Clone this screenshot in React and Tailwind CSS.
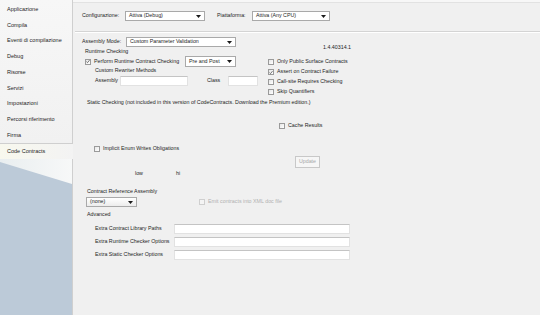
import React from "react";

const navItems = [
  "Applicazione",
  "Compila",
  "Eventi di compilazione",
  "Debug",
  "Risorse",
  "Servizi",
  "Impostazioni",
  "Percorsi riferimento",
  "Firma",
];

const Arrow = () => (
  <svg width="5" height="3" viewBox="0 0 5 3" className="shrink-0">
    <path d="M0 0 L5 0 L2.5 3 Z" fill="#1a1a1a" />
  </svg>
);

const Select = ({ value, className = "" }) => (
  <div
    className={`flex items-center justify-between h-[10px] border border-[#a9a9a9] bg-white pl-[3px] pr-[3px] shrink-0 ${className}`}
  >
    <span className="leading-none">{value}</span>
    <Arrow />
  </div>
);

const Checkbox = ({ checked, disabled, label, className = "" }) => (
  <div className={`flex items-center h-[10px] ${className}`}>
    <div
      className={`w-[6px] h-[6px] shrink-0 border flex items-center justify-center ${
        disabled ? "border-[#cfcfcf] bg-[#f4f4f4]" : "border-[#9a9a9a] bg-gradient-to-br from-[#e6e6e6] to-white"
      }`}
    >
      {checked && (
        <svg width="5" height="5" viewBox="0 0 5 5">
          <path d="M0.6 2.6 L1.9 3.9 L4.4 0.8" stroke="#444" strokeWidth="0.9" fill="none" />
        </svg>
      )}
    </div>
    <span className={`ml-[3px] leading-none ${disabled ? "text-[#b0b0b0]" : ""}`}>{label}</span>
  </div>
);

const Input = ({ className = "" }) => (
  <div className={`h-[10px] shrink-0 bg-white border border-[#e2e2e2] border-t-[#c4c4c4] ${className}`} />
);

export default function App() {
  return (
    <div
      className="flex w-[540px] h-[315px] overflow-hidden whitespace-nowrap bg-[#f0f0f0] text-[5.3px] text-[#1e1e1e]"
      style={{ fontFamily: '"Liberation Sans", Arial, sans-serif' }}
    >
      {/* SIDEBAR */}
      <div className="w-[73px] shrink-0 flex flex-col text-[5.5px]">
        <div className="bg-gradient-to-b from-[#f7f7f7] to-[#f1f1f1] border-r border-[#cfcfcf] pt-px border-b border-b-[#cfcfcf]">
          {navItems.map((item) => (
            <div key={item} className="h-[15.75px] flex items-center pl-[7px]">
              {item}
            </div>
          ))}
        </div>
        <div className="h-[15.5px] flex items-center pl-[7px] bg-gradient-to-r from-[#f8f8ee] to-[#f3f3f3]">
          Code Contracts
        </div>
        <div className="flex-1 relative border-r border-[#cfcfcf] bg-[#bccad8]">
          <svg className="absolute left-0 top-0" width="72" height="30" viewBox="0 0 72 30">
            <defs>
              <linearGradient id="wedge" x1="0" y1="0" x2="1" y2="0">
                <stop offset="0" stopColor="#e9eef0" />
                <stop offset="1" stopColor="#f7f8f8" />
              </linearGradient>
            </defs>
            <polygon points="0,0 72,0 72,25 0,3" fill="url(#wedge)" />
          </svg>
        </div>
      </div>

      {/* MAIN */}
      <div className="flex-1 flex flex-col">
        <div className="h-[3px] bg-[#f7f7f7] border-b border-[#e2e2e2]" />
        <div className="pl-[9px]">
          {/* CONFIG ROW */}
          <div className="flex items-center h-[10px] mt-[8px]">
            <span className="w-[43px] shrink-0">Configurazione:</span>
            <Select value="Attiva (Debug)" className="w-[80px]" />
            <span className="ml-[12px] w-[35px] shrink-0">Piattaforma:</span>
            <Select value="Attiva (Any CPU)" className="w-[78px]" />
          </div>
        </div>
        <div className="mt-[10px] ml-[2px] h-px bg-[#d4d4d4]" />
        <div className="ml-[2px] h-px bg-white" />

        <div className="pl-[9px]">
          {/* ASSEMBLY / RUNTIME */}
          <div className="flex mt-[4px]">
            <div className="w-[186px] shrink-0">
              <div className="flex items-center h-[10px]">
                <span className="w-[44px] shrink-0">Assembly Mode:</span>
                <Select value="Custom Parameter Validation" className="w-[110px]" />
              </div>
              <div className="h-[8px] mt-px flex items-center ml-[3px]">Runtime Checking</div>
              <div className="h-[11px] flex items-center ml-[3px]">
                <Checkbox checked label="Perform Runtime Contract Checking" className="w-[100px] shrink-0" />
                <Select value="Pre and Post" className="w-[51px] h-[11px]" />
              </div>
              <div className="h-[8px] flex items-center ml-[13px]">Custom Rewriter Methods</div>
              <div className="h-[10px] mt-px flex items-center ml-[13px]">
                <span className="w-[25px] shrink-0">Assembly</span>
                <Input className="w-[68px]" />
                <span className="ml-[19px] w-[21px] shrink-0">Class</span>
                <Input className="w-[30px]" />
              </div>
            </div>
            <div className="w-[83px] shrink-0">
              <div className="h-[8px] mt-[7px] flex items-center justify-end">1.4.40314.1</div>
              <div className="mt-[5px]">
                <Checkbox label="Only Public Surface Contracts" />
                <Checkbox checked label="Assert on Contract Failure" />
                <Checkbox label="Call-site Requires Checking" />
                <Checkbox label="Skip Quantifiers" />
              </div>
            </div>
          </div>

          {/* STATIC CHECKING */}
          <div className="h-[8px] mt-[2px] flex items-center ml-[5px]">
            Static Checking (not included in this version of CodeContracts. Download the Premium edition.)
          </div>
          <Checkbox label="Cache Results" className="mt-[14px] ml-[197px]" />
          <Checkbox label="Implicit Enum Writes Obligations" className="mt-[13px] ml-[12px]" />
          <div className="mt-[2px] ml-[213px] w-[25px] h-[12px] border border-[#c8c8c8] bg-[#f6f6f6] flex items-center justify-center text-[#a8a8a8]">
            Update
          </div>
          <div className="h-[8px] mt-[2px] flex items-center">
            <span className="ml-[53px] w-[41px]">low</span>
            <span>hi</span>
          </div>

          {/* CONTRACT REFERENCE */}
          <div className="h-[8px] mt-[10px] flex items-center ml-[5px]">Contract Reference Assembly</div>
          <div className="h-[10px] mt-px flex items-center">
            <Select value="(none)" className="ml-[4px] w-[51px] bg-gradient-to-b from-white to-[#ececec]" />
            <Checkbox disabled label="Emit contracts into XML doc file" className="ml-[62px]" />
          </div>

          {/* ADVANCED */}
          <div className="h-[8px] mt-[4px] flex items-center ml-[5px]">Advanced</div>
          <div className="mt-[5px] flex flex-col gap-[3px]">
            {["Extra Contract Library Paths", "Extra Runtime Checker Options", "Extra Static Checker Options"].map(
              (label) => (
                <div key={label} className="h-[10px] flex items-center ml-[13px]">
                  <span className="w-[79px] shrink-0">{label}</span>
                  <Input className="w-[176px]" />
                </div>
              )
            )}
          </div>
        </div>
      </div>
    </div>
  );
}
